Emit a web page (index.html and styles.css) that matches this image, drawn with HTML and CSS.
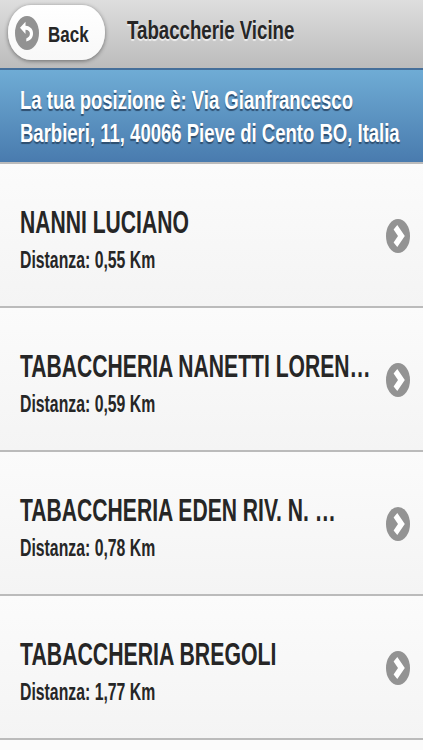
FILE: index.html
```
<!DOCTYPE html>
<html lang="it">
<head>
<meta charset="utf-8">
<title>Tabaccherie Vicine</title>
<link rel="stylesheet" href="styles.css">
</head>
<body>
<svg width="0" height="0" class="defs">
  <symbol id="arrow" viewBox="0 0 24 34" preserveAspectRatio="none">
    <ellipse cx="12" cy="17" rx="12" ry="17" fill="#939393"/>
    <path d="M7.6 10.5 L11.3 6 L18.8 17 L11.3 28 L7.6 23.5 L12 17 Z" fill="#fff"/>
  </symbol>
</svg>
<header class="header">
  <a class="back">
    <svg class="back-icon" viewBox="0 0 24 34">
      <ellipse cx="12" cy="17" rx="12" ry="17" fill="#929292"/>
      <path d="M5 11.8 L10.5 5.8 V9.8 C15.5 10.3 18.3 13.5 18 18 C17.7 22 15.3 24.8 11.3 25.4 V22.4 C13.7 21.6 14.9 20 14.9 17.8 C14.9 15.3 13.3 14 10.5 13.8 V18 Z" fill="#fff"/>
    </svg>
    <span class="text back-text">Back</span>
  </a>
  <h1 class="text heading">Tabaccherie Vicine</h1>
</header>
<section class="banner">
  <div class="text line1">La tua posizione è: Via Gianfrancesco</div>
  <div class="text line2">Barbieri, 11, 40066 Pieve di Cento BO, Italia</div>
</section>
<ul class="list">
  <li class="row"><div class="info"><h2 class="text name">NANNI LUCIANO</h2><p class="text distance">Distanza: 0,55 Km</p></div><svg class="arrow"><use href="#arrow"/></svg></li>
  <li class="row"><div class="info"><h2 class="text name">TABACCHERIA NANETTI LOREN…</h2><p class="text distance">Distanza: 0,59 Km</p></div><svg class="arrow"><use href="#arrow"/></svg></li>
  <li class="row"><div class="info"><h2 class="text name">TABACCHERIA EDEN RIV. N. …</h2><p class="text distance">Distanza: 0,78 Km</p></div><svg class="arrow"><use href="#arrow"/></svg></li>
  <li class="row"><div class="info"><h2 class="text name">TABACCHERIA BREGOLI</h2><p class="text distance">Distanza: 1,77 Km</p></div><svg class="arrow"><use href="#arrow"/></svg></li>
</ul>
<div class="next-row"></div>
</body>
</html>
```
FILE: styles.css
```
* { box-sizing: border-box; margin: 0; padding: 0; }
body {
  height: 750px;
  overflow: hidden;
  background: #fafafa;
  color: #262626;
  font-family: "Liberation Sans", Arial, sans-serif;
  font-weight: bold;
}
.defs { position: absolute; }
/* Condensed lettering: every label is narrowed from its left edge. */
.text {
  width: max-content;
  white-space: nowrap;
  font-weight: bold;
  transform-origin: 0 50%;
}
.header {
  display: flex;
  align-items: flex-start;
  height: 70px;
  padding: 5px 0 0 8px;
  background: linear-gradient(#dedede, #bcbcbc);
  border-bottom: 2px solid #456f9a;
}
.back {
  display: flex;
  align-items: flex-start;
  width: 97px;
  height: 55px;
  padding: 11px 0 0 7px;
  border-radius: 23px / 27px;
  background: linear-gradient(#fff, #f8f8f8);
  box-shadow: 0 1px 4px rgba(0, 0, 0, .45);
}
.back-icon { width: 24px; height: 34px; margin-right: 9px; flex: none; }
.back-text {
  font-size: 22.5px;
  line-height: 26px;
  margin-top: 6px;
  transform: scaleX(.755);
}
.heading {
  margin: 9px 0 0 22px;
  font-size: 26px;
  line-height: 32px;
  transform: scaleX(.718);
  text-shadow: 0 2px 1px #eee;
}
.banner {
  height: 92px;
  padding: 14px 0 0 20px;
  color: #fff;
  background: linear-gradient(#6facd5, #497bae);
}
.line1, .line2 {
  font-size: 26px;
  line-height: 33px;
  transform: scaleX(.712);
  text-shadow: 0 2px 1px #2e4f70;
}
.list { list-style: none; }
.row {
  display: flex;
  justify-content: space-between;
  align-items: center;
  height: 144px;
  padding: 2px 13px 0 20px;
  border-top: 2px solid #bbb;
  background: linear-gradient(#fbfbfb, #f4f4f4);
}
.info { width: 350px; padding-top: 5px; }
.name { font-size: 31px; line-height: 38px; transform: translateY(1px) scaleX(.681); }
.row:last-child .name { transform: translateY(1px) scaleX(.686); }
.distance { font-size: 23px; line-height: 30px; margin-top: 4px; transform: scaleX(.687); }
.arrow { width: 24px; height: 34px; flex: none; margin-left: -8px; }
.next-row { height: 12px; border-top: 2px solid #bbb; background: #fbfbfb; }
```
